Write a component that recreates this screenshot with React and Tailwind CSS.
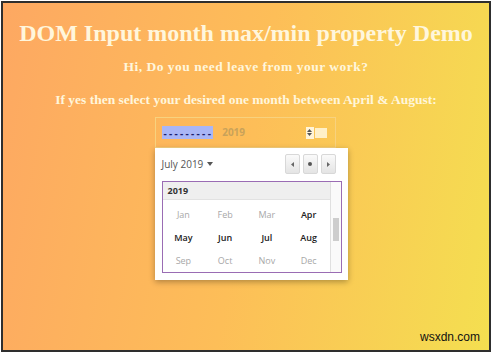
import React from 'react';

const months = [
  ['Jan', false], ['Feb', false], ['Mar', false], ['Apr', true],
  ['May', true], ['Jun', true], ['Jul', true], ['Aug', true],
  ['Sep', false], ['Oct', false], ['Nov', false], ['Dec', false],
];

const serif = { fontFamily: '"Liberation Serif", "Times New Roman", serif' };
const sans = { fontFamily: '"Open Sans", "DejaVu Sans", sans-serif' };

const NavButton = ({ children }) => (
  <div className="w-[15px] h-[20px] flex items-center justify-center rounded-[2px] border border-[#d8d8d8] bg-linear-to-b from-[#fafafa] to-[#e4e4e4]">
    {children}
  </div>
);

export default function App() {
  return (
    <div className="w-[492px] h-[353px] bg-white p-px">
      <div className="relative w-full h-full border-2 border-[#2e2e2e] bg-linear-[100deg] from-[#fda862] via-[#fdbe58] to-[#f4df50] flex flex-col items-center">
        <h1 style={serif} className="mt-[16px] text-[24px] leading-[28px] font-bold text-[#fff6dc] whitespace-nowrap">
          DOM Input month max/min property Demo
        </h1>
        <p style={serif} className="mt-[12px] text-[13.5px] leading-[16px] tracking-[0.5px] font-bold text-[#fff6dc]">
          Hi, Do you need leave from your work?
        </p>
        <p style={serif} className="mt-[17px] text-[13.5px] leading-[16px] font-bold text-[#fff6dc] whitespace-nowrap">
          If yes then select your desired one month between April &amp; August:
        </p>

        <div className="relative mt-[9px] ml-[-2px] w-[181px]">
          <div className="h-[31px] border border-[#f8d27e] flex items-center pl-[6px] pr-[8px]">
            <span className="bg-[#aab6f6] pl-[2px] h-[13px] flex items-center text-[#1c1f6e] text-[10px] font-bold tracking-[2.3px] leading-none" style={sans}>
              ---------
            </span>
            <span style={sans} className="ml-[9px] text-[10px] font-bold text-[#c9a25a]">2019</span>
            <div className="ml-auto flex items-center">
              <div className="w-[8px] h-[12px] bg-[#fff4d8] flex flex-col items-center justify-center gap-[1px]">
                <svg width="5" height="3" viewBox="0 0 5 3"><path d="M0 3L2.5 0L5 3Z" fill="#555" /></svg>
                <svg width="5" height="3" viewBox="0 0 5 3"><path d="M0 0L2.5 3L5 0Z" fill="#555" /></svg>
              </div>
              <div className="w-[12px] h-[10px] bg-[#fff0c8] ml-px" />
            </div>
          </div>

          <div className="absolute left-0 top-[31px] w-[193px] h-[132px] bg-white shadow-[0_2px_6px_rgba(0,0,0,0.3)] px-[7px] pt-[5px]">
            <div className="flex items-center h-[22px]">
              <span style={sans} className="text-[10px] text-[#555]">July 2019</span>
              <svg className="ml-[4px]" width="6" height="4" viewBox="0 0 6 4"><path d="M0 0L3 4L6 0Z" fill="#555" /></svg>
              <div className="ml-auto mr-[5px] flex gap-[3px]">
                <NavButton>
                  <svg width="3" height="5" viewBox="0 0 3 5"><path d="M3 0L0 2.5L3 5Z" fill="#666" /></svg>
                </NavButton>
                <NavButton>
                  <div className="w-[4px] h-[4px] rounded-full bg-[#555]" />
                </NavButton>
                <NavButton>
                  <svg width="3" height="5" viewBox="0 0 3 5"><path d="M0 0L3 2.5L0 5Z" fill="#666" /></svg>
                </NavButton>
              </div>
            </div>
            <div className="mt-[6px] w-[180px] h-[92px] border border-[#9a6cb4] flex">
              <div className="flex-1 flex flex-col">
                <div style={sans} className="h-[18px] bg-[#efefef] border-b border-[#e2e2e2] flex items-center pl-[5px] text-[9px] font-bold text-[#333]">
                  2019
                </div>
                <div className="grid grid-cols-4 flex-1 pt-[3px]">
                  {months.map(([m, on]) => (
                    <div
                      key={m}
                      style={sans}
                      className={`flex items-center justify-center text-[9px] ${on ? 'text-[#222] font-semibold' : 'text-[#a8a8a8]'}`}
                    >
                      {m}
                    </div>
                  ))}
                </div>
              </div>
              <div className="w-[11px] border-l border-[#e0e0e0] bg-[#fafafa] flex flex-col">
                <div className="mt-[36px] mx-[2px] h-[23px] bg-[#cdcdcd]" />
              </div>
            </div>
          </div>
        </div>

        <span style={{ fontFamily: '"Liberation Sans", Arial, sans-serif' }} className="absolute right-[9px] bottom-[4px] text-[12px] text-[#111]">
          wsxdn.com
        </span>
      </div>
    </div>
  );
}
